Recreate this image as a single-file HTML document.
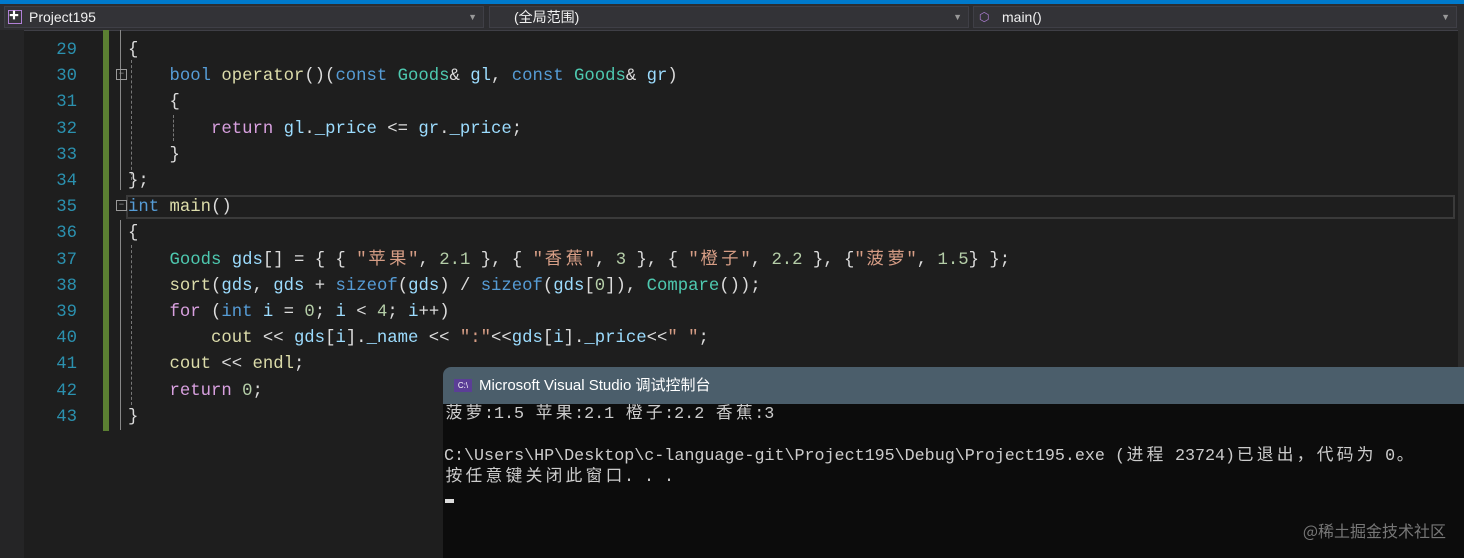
<!DOCTYPE html>
<html><head><meta charset="utf-8"><style>
body{margin:0;width:1464px;height:558px;background:#1e1e1e;overflow:hidden;position:relative;font-family:"Liberation Mono","Noto Sans CJK SC",monospace}
.top{position:absolute;left:0;top:0;width:1464px;height:4px;background:#007acc}
.bar{position:absolute;top:4px;height:26px;background:#2d2d30;border-bottom:1px solid #3f3f46;width:1464px}
.dd{position:absolute;top:6px;height:22px;background:#333337;border:1px solid #3f3f46;box-sizing:border-box;color:#f1f1f1;font:14px "Liberation Sans","Noto Sans CJK SC",sans-serif;line-height:20px}
.arr{position:absolute;right:6px;top:0;color:#999;font-size:9px}
.ln{position:absolute;left:0;width:77px;text-align:right;color:#2b91af;font-size:17.3px;line-height:26.2px}
.code{position:absolute;left:128px;font-size:17.3px;line-height:26.2px;color:#dcdcdc;white-space:pre}
.k{color:#569cd6}.t{color:#4ec9b0}.s{color:#d69d85}.n{color:#b5cea8}.f{color:#dcdcaa}.v{color:#9cdcfe}.p{color:#d8a0df}
.c{display:inline-block;width:20.8px;text-align:center}
.cc{display:inline-block;width:20px;text-align:center}
.con{position:absolute;left:443px;top:367px;width:1021px;height:191px;background:#0c0c0c;border-radius:8px 0 0 0;overflow:hidden}
.ct{height:37px;background:#4b5e6b;color:#fff;font:15px "Liberation Sans","Noto Sans CJK SC",sans-serif;line-height:37px;padding-left:36px;position:relative}
.co{color:#cccccc;font-size:16.7px;line-height:21px;white-space:pre;font-family:"Liberation Mono","Noto Sans CJK SC",monospace}
.g{position:absolute;width:0;border-left:1px dashed #777}
</style></head><body>
<div class="top"></div>
<div class="bar"></div>
<div class="dd" style="left:4px;width:480px"><span style="position:absolute;left:3px;top:3px;width:14px;height:14px;border:1px solid #b180d7;box-sizing:border-box;color:#fff;font-size:10px;line-height:12px">✚</span><span style="position:absolute;left:24px">Project195</span><span class="arr">▼</span></div>
<div class="dd" style="left:489px;width:480px"><span style="position:absolute;left:24px">(全局范围)</span><span class="arr">▼</span></div>
<div class="dd" style="left:973px;width:484px"><span style="position:absolute;left:5px;color:#b180d7;font-size:12px">⬡</span><span style="position:absolute;left:28px">main()</span><span class="arr">▼</span></div>
<div style="position:absolute;left:1458px;top:30px;width:6px;height:528px;background:#2b2b2b"></div>
<div style="position:absolute;left:0;top:30px;width:24px;height:528px;background:#252526"></div>
<div style="position:absolute;left:103px;top:30px;width:6px;height:401px;background:#5b7f32"></div>
<div style="position:absolute;left:126px;top:195px;width:1329px;height:24px;border:2px solid #3a3a3a;box-sizing:border-box"></div>
<div style="position:absolute;left:120px;top:30px;width:1px;height:160px;background:#888"></div>
<div class="g" style="left:131px;top:60px;height:120px"></div>
<div class="g" style="left:173px;top:115px;height:26px"></div>
<div style="position:absolute;left:116px;top:69px;width:9px;height:9px;border:1px solid #999;color:#999;font-size:9px;line-height:8px;text-align:center">−</div>
<div style="position:absolute;left:116px;top:200px;width:9px;height:9px;border:1px solid #999;color:#999;font-size:9px;line-height:8px;text-align:center">−</div>
<div style="position:absolute;left:120px;top:220px;width:1px;height:210px;background:#888"></div>
<div class="g" style="left:131px;top:245px;height:160px"></div>
<div class="ln" style="top:38px">29<br>30<br>31<br>32<br>33<br>34<br>35<br>36<br>37<br>38<br>39<br>40<br>41<br>42<br>43</div>
<div class="code" style="top:38px">{
    <span class="k">bool</span> <span class="f">operator</span>()(<span class="k">const</span> <span class="t">Goods</span>&amp; <span class="v">gl</span>, <span class="k">const</span> <span class="t">Goods</span>&amp; <span class="v">gr</span>)
    {
        <span class="p">return</span> <span class="v">gl</span>.<span class="v">_price</span> &lt;= <span class="v">gr</span>.<span class="v">_price</span>;
    }
};
<span class="k">int</span> <span class="f">main</span>()
{
    <span class="t">Goods</span> <span class="v">gds</span>[] = { { <span class="s">"<span class="c">苹</span><span class="c">果</span>"</span>, <span class="n">2.1</span> }, { <span class="s">"<span class="c">香</span><span class="c">蕉</span>"</span>, <span class="n">3</span> }, { <span class="s">"<span class="c">橙</span><span class="c">子</span>"</span>, <span class="n">2.2</span> }, {<span class="s">"<span class="c">菠</span><span class="c">萝</span>"</span>, <span class="n">1.5</span>} };
    <span class="f">sort</span>(<span class="v">gds</span>, <span class="v">gds</span> + <span class="k">sizeof</span>(<span class="v">gds</span>) / <span class="k">sizeof</span>(<span class="v">gds</span>[<span class="n">0</span>]), <span class="t">Compare</span>());
    <span class="p">for</span> (<span class="k">int</span> <span class="v">i</span> = <span class="n">0</span>; <span class="v">i</span> &lt; <span class="n">4</span>; <span class="v">i</span>++)
        <span class="f">cout</span> &lt;&lt; <span class="v">gds</span>[<span class="v">i</span>].<span class="v">_name</span> &lt;&lt; <span class="s">":"</span>&lt;&lt;<span class="v">gds</span>[<span class="v">i</span>].<span class="v">_price</span>&lt;&lt;<span class="s">" "</span>;
    <span class="f">cout</span> &lt;&lt; <span class="f">endl</span>;
    <span class="p">return</span> <span class="n">0</span>;
}</div>
<div class="con">
<div class="ct"><span style="position:absolute;left:11px;top:12px;width:18px;height:13px;background:#5b3e96;font-size:8px;line-height:13px;text-align:center;color:#fff">C:\</span>Microsoft Visual Studio 调试控制台</div>
<div class="co" style="padding:0 0 0 1px"><span class="cc">菠</span><span class="cc">萝</span>:1.5 <span class="cc">苹</span><span class="cc">果</span>:2.1 <span class="cc">橙</span><span class="cc">子</span>:2.2 <span class="cc">香</span><span class="cc">蕉</span>:3

C:\Users\HP\Desktop\c-language-git\Project195\Debug\Project195.exe (<span class="cc">进</span><span class="cc">程</span> 23724)<span class="cc">已</span><span class="cc">退</span><span class="cc">出</span><span class="cc">，</span><span class="cc">代</span><span class="cc">码</span><span class="cc">为</span> 0<span class="cc">。</span>
<span class="cc">按</span><span class="cc">任</span><span class="cc">意</span><span class="cc">键</span><span class="cc">关</span><span class="cc">闭</span><span class="cc">此</span><span class="cc">窗</span><span class="cc">口</span>. . .</div>
<div style="position:absolute;left:2px;top:132px;width:9px;height:4px;background:#ddd"></div>
<div style="position:absolute;right:18px;top:151px;color:#777;font:16px 'Noto Sans CJK SC',sans-serif">@稀土掘金技术社区</div>
</div>
</body></html>
